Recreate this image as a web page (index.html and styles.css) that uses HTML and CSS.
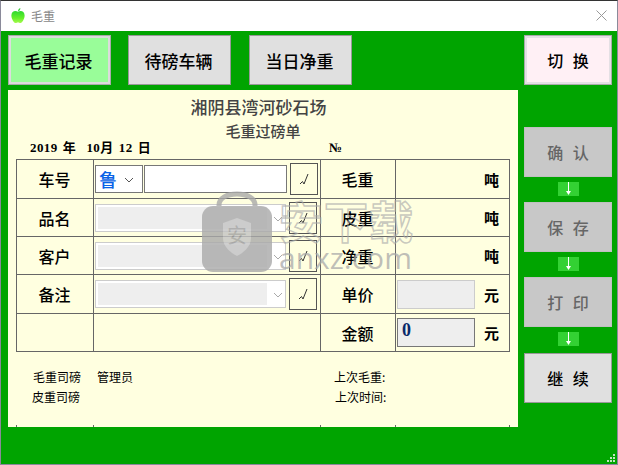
FILE: index.html
```html
<!DOCTYPE html>
<html lang="zh-CN">
<head>
    <meta charset="UTF-8">
    <title>毛重</title>
    <link rel="stylesheet" href="styles.css">
</head>
<body>
    <div class="window">
        <div class="titlebar">
            <svg class="app-icon" width="16" height="17" viewBox="0 0 16 18">
                <defs>
                    <linearGradient id="apple" x1="0" y1="0" x2="0" y2="1">
                        <stop offset="0" stop-color="#2fd82f"/>
                        <stop offset="0.6" stop-color="#66f02a"/>
                        <stop offset="1" stop-color="#a8fa50"/>
                    </linearGradient>
                </defs>
                <path d="M8 5C5 3.500 1 4.500 1 9c0 4 3 8 4.500 8 1 0 1.500-.5 2.500-.5s1.500.5 2.500.5C12 17 15 13 15 9c0-4.500-4-5.500-7-4z" fill="url(#apple)"/>
                <path d="M8 4.500C8 3 9 1.500 10.500 1 10.500 3 9.500 4.200 8 4.500z" fill="#33cc33"/>
            </svg>
            <span class="title-text">毛重</span>
            <svg class="close" width="11" height="11" viewBox="0 0 11 11">
                <path d="M.5.500l10 10M10.500.500l-10 10" stroke="#999" fill="none"/>
            </svg>
        </div>

        <div class="main">
            <div class="left">
                <div class="tabs">
                    <div class="btn tab tab-active">毛重记录</div>
                    <div class="btn tab">待磅车辆</div>
                    <div class="btn tab">当日净重</div>
                </div>

                <div class="paper">
                    <div class="company">湘阴县湾河砂石场</div>
                    <div class="doc-title">毛重过磅单</div>
                    <div class="date-row">
                        <span class="date">2019 年&nbsp; 10月 12 日</span>
                        <span class="doc-no">№</span>
                    </div>

                    <table class="form">
                        <colgroup>
                            <col class="col-label">
                            <col class="col-input">
                            <col class="col-label2">
                            <col class="col-value">
                        </colgroup>
                        <tr class="row-a">
                            <th>车号</th>
                            <td>
                                <div class="controls">
                                    <div class="select select-plate">
                                        <span class="plate">鲁</span>
                                        <svg class="chev" width="10" height="6" viewBox="0 0 10 6"><path d="M1 1l4 4 4-4" stroke="#555" fill="none"/></svg>
                                    </div>
                                    <div class="plate-input"></div>
                                    <div class="tick"><svg width="12" height="12" viewBox="0 0 12 12"><path d="M2 11l2.500-2.500 1.500 2.500 4-10" stroke="#333" fill="none"/></svg></div>
                                </div>
                            </td>
                            <th>毛重</th>
                            <td class="unit">吨</td>
                        </tr>
                        <tr class="row-b">
                            <th>品名</th>
                            <td>
                                <div class="controls">
                                    <div class="select select-off">
                                        <span class="fill"></span>
                                        <svg class="chev" width="10" height="6" viewBox="0 0 10 6"><path d="M1 1l4 4 4-4" stroke="#aaa" fill="none"/></svg>
                                    </div>
                                    <div class="tick"><svg width="12" height="12" viewBox="0 0 12 12"><path d="M2 11l2.500-2.500 1.500 2.500 4-10" stroke="#333" fill="none"/></svg></div>
                                </div>
                            </td>
                            <th>皮重</th>
                            <td class="unit">吨</td>
                        </tr>
                        <tr class="row-b">
                            <th>客户</th>
                            <td>
                                <div class="controls">
                                    <div class="select select-off">
                                        <span class="fill"></span>
                                        <svg class="chev" width="10" height="6" viewBox="0 0 10 6"><path d="M1 1l4 4 4-4" stroke="#aaa" fill="none"/></svg>
                                    </div>
                                    <div class="tick"><svg width="12" height="12" viewBox="0 0 12 12"><path d="M2 11l2.500-2.500 1.500 2.500 4-10" stroke="#333" fill="none"/></svg></div>
                                </div>
                            </td>
                            <th>净重</th>
                            <td class="unit">吨</td>
                        </tr>
                        <tr class="row-a">
                            <th>备注</th>
                            <td>
                                <div class="controls">
                                    <div class="select select-off">
                                        <span class="fill"></span>
                                        <svg class="chev" width="10" height="6" viewBox="0 0 10 6"><path d="M1 1l4 4 4-4" stroke="#aaa" fill="none"/></svg>
                                    </div>
                                    <div class="tick"><svg width="12" height="12" viewBox="0 0 12 12"><path d="M2 11l2.500-2.500 1.500 2.500 4-10" stroke="#333" fill="none"/></svg></div>
                                </div>
                            </td>
                            <th>单价</th>
                            <td>
                                <div class="value-cell">
                                    <div class="amount amount-off"></div>
                                    <span class="unit-text">元</span>
                                </div>
                            </td>
                        </tr>
                        <tr class="row-b">
                            <th></th>
                            <td></td>
                            <th>金额</th>
                            <td>
                                <div class="value-cell">
                                    <div class="amount">0</div>
                                    <span class="unit-text">元</span>
                                </div>
                            </td>
                        </tr>
                    </table>

                    <div class="notes">
                        <div class="notes-left">
                            <div class="note"><span class="note-key">毛重司磅</span><span>管理员</span></div>
                            <div class="note note-shift"><span class="note-key">皮重司磅</span></div>
                        </div>
                        <div class="notes-right">
                            <div class="note">上次毛重:</div>
                            <div class="note note-nudge">上次时间:</div>
                        </div>
                    </div>
                </div>
            </div>

            <div class="side">
                <div class="btn side-btn switch">切 换</div>
                <div class="btn side-btn off first-off">确 认</div>
                <div class="arrow"><svg width="7" height="14" viewBox="0 0 7 14"><path d="M3.500 0v10" stroke="#fff"/><path d="M1 9h5l-2.500 4z" fill="#fff"/></svg></div>
                <div class="btn side-btn off">保 存</div>
                <div class="arrow"><svg width="7" height="14" viewBox="0 0 7 14"><path d="M3.500 0v10" stroke="#fff"/><path d="M1 9h5l-2.500 4z" fill="#fff"/></svg></div>
                <div class="btn side-btn off">打 印</div>
                <div class="arrow"><svg width="7" height="14" viewBox="0 0 7 14"><path d="M3.500 0v10" stroke="#fff"/><path d="M1 9h5l-2.500 4z" fill="#fff"/></svg></div>
                <div class="btn side-btn next">继 续</div>
            </div>
        </div>

        <!-- watermark over the form -->
        <div class="watermark">
            <svg class="wm-lock" width="72" height="82" viewBox="0 0 72 82">
                <path d="M18 18V14C18 7 26 3 36 3s18 4 18 11v4" fill="none" stroke="#aaa" stroke-width="5"/>
                <rect x="1" y="15" width="70" height="66" rx="11" fill="#aaa"/>
                <path d="M22 32l14-5 14 5v15c0 9-8 15-14 18-6-3-14-9-14-18z" fill="#c4c4c4"/>
                <text x="36" y="52" text-anchor="middle" class="wm-lock-text">安</text>
            </svg>
            <div class="wm-text">
                <div class="wm-cn">安下载</div>
                <div class="wm-en">anxz.com</div>
            </div>
        </div>

        <svg class="grip" width="9" height="9" viewBox="0 0 9 9">
            <path d="M6 0h2v2H6zM3 3h2v2H3zM6 3h2v2H6zM0 6h2v2H0zM3 6h2v2H3zM6 6h2v2H6z" fill="#bfe6bf"/>
        </svg>
    </div>
</body>
</html>
```

FILE: styles.css
```css
* {
    margin: 0;
    padding: 0;
    box-sizing: border-box;
}

body {
    width: 618px;
    height: 465px;
    overflow: hidden;
    background: #333;
    font-family: "Noto Sans CJK SC", "Liberation Sans", sans-serif;
}

.window {
    position: relative;
    width: 618px;
    height: 465px;
    display: flex;
    flex-direction: column;
    background: #00a400;
    border-left: 1px solid #8a8a9a;
    border-right: 1px solid #8a8a9a;
    border-bottom: 1px solid #8a8a9a;
    border-top: 1px solid #333;
}

.titlebar {
    height: 30px;
    flex-shrink: 0;
    display: flex;
    align-items: center;
    background: #fff;
    padding: 0 10px 2px 9px;
}

.app-icon {
    margin-right: 5px;
}

.title-text {
    font-size: 12px;
    color: #888;
    flex: 1;
}

.main {
    flex: 1;
    display: flex;
    padding: 4px 5px 0 7px;
}

.left {
    width: 510px;
    margin-right: 6px;
}

.tabs {
    display: flex;
    gap: 17px;
    margin-bottom: 5px;
}

.btn {
    display: flex;
    align-items: center;
    justify-content: center;
    height: 50px;
    border: 1px solid #999;
    background: #e0e0e0;
    color: #000;
    font-weight: 500;
}

.tab {
    width: 103px;
    font-size: 17px;
    padding-right: 2px;
}

.tab:last-child {
    margin-left: 1px;
}

.tab-active {
    background: #99fd99;
    border-color: #aaa;
    box-shadow: inset 0 0 0 2px #dcdcdc;
}

.paper {
    position: relative;
    height: 337px;
    background: #ffffe0;
    padding: 7px 8px 0;
    color: #000;
}

/* short stubs of table lines left at the bottom edge */
.paper::after {
    content: "";
    position: absolute;
    left: 8px;
    right: 8px;
    bottom: 0;
    height: 2px;
    background:
        linear-gradient(#666, #666) 0 0 / 1px 2px no-repeat,
        linear-gradient(#666, #666) 77px 0 / 1px 2px no-repeat,
        linear-gradient(#666, #666) 304px 0 / 1px 2px no-repeat,
        linear-gradient(#666, #666) 379px 0 / 1px 2px no-repeat,
        linear-gradient(#666, #666) 493px 0 / 1px 2px no-repeat;
}

.company {
    text-align: center;
    font-size: 17px;
    font-weight: 500;
    line-height: 20px;
    color: #444;
    padding-right: 9px;
}

.doc-title {
    text-align: center;
    font-size: 15px;
    font-weight: 500;
    line-height: 20px;
    margin-top: 4px;
    color: #444;
}

.date-row {
    display: flex;
    height: 18px;
    align-items: flex-start;
    line-height: 14px;
    font-size: 13px;
    font-weight: 700;
    font-family: "Liberation Serif", "Noto Sans CJK SC", serif;
}

.date {
    margin-left: 14px;
    width: 299px;
    letter-spacing: 0.4px;
    word-spacing: 1.500px;
}

.doc-no {
    font-size: 13px;
}

.form {
    border-collapse: collapse;
    table-layout: fixed;
    width: 493px;
}

.col-label { width: 77px; }
.col-input { width: 227px; }
.col-label2 { width: 75px; }
.col-value { width: 114px; }

.form th,
.form td {
    border: 1px solid #666;
    padding: 0;
}

.form th {
    font-size: 16px;
    font-weight: 500;
    text-align: center;
    padding-right: 1px;
}

.row-a { height: 39px; }
.row-b { height: 38px; }

.unit {
    text-align: right;
    padding-right: 10px !important;
    font-size: 15px;
    font-weight: 700;
}

.controls {
    display: flex;
    align-items: center;
    padding-left: 1px;
    height: 100%;
}

.select {
    position: relative;
    height: 28px;
    display: flex;
    align-items: center;
    background: #fff;
}

.select-plate {
    width: 48px;
    border: 1px solid #777;
    padding-left: 3px;
}

.plate {
    font-size: 18px;
    line-height: 1;
    color: #0a62e6;
    font-weight: 500;
}

.select-plate .chev {
    position: absolute;
    right: 8px;
    top: 11px;
}

.select-off {
    width: 191px;
    border: 1px solid #ccc;
    padding: 2px;
}

.fill {
    display: block;
    width: 169px;
    height: 100%;
    background: #eee;
}

.select-off .chev {
    position: absolute;
    right: 2px;
    top: 11px;
}

.plate-input {
    width: 143px;
    height: 28px;
    margin-left: 1px;
    background: #fff;
    border: 1px solid #777;
}

.tick {
    width: 28px;
    height: 32px;
    margin-left: 3px;
    border: 1px solid #555;
    display: flex;
    align-items: center;
    justify-content: center;
}

.value-cell {
    display: flex;
    align-items: center;
    padding-left: 1px;
}

.amount {
    width: 78px;
    height: 29px;
    background: #eee;
    border: 1px solid #777;
    padding-left: 4px;
    font-family: "Liberation Serif", serif;
    font-size: 18px;
    line-height: 23px;
    font-weight: 700;
    color: #0a2a6a;
}

.amount-off {
    border-color: #ccc;
}

.unit-text {
    margin-left: 9px;
    font-size: 15px;
    font-weight: 700;
}

.notes {
    display: flex;
    padding-top: 15px;
    font-size: 12px;
    line-height: 20px;
    color: #000;
}

.notes-left {
    width: 318px;
    padding-left: 17px;
}

.note-key {
    display: inline-block;
    width: 64px;
}

.note-shift {
    margin-left: -1px;
}

.note-nudge {
    margin-left: 1px;
}

.side {
    width: 88px;
    display: flex;
    flex-direction: column;
    align-items: center;
}

.side-btn {
    width: 88px;
    font-size: 16px;
    word-spacing: 6px;
    white-space: pre;
}

.switch {
    background: #fff0f5;
    border-color: #aaa;
    box-shadow: inset 0 0 0 2px #e4e0e4;
    margin-bottom: 42px;
}

.off {
    background: #c8c8c8;
    border-color: #c0c0c0;
    color: #666;
}

.arrow {
    width: 21px;
    height: 14px;
    margin: 5px 0 6px;
    background: #33d133;
    display: flex;
    justify-content: center;
}

.next {
    margin-top: 1px;
}

.watermark {
    position: absolute;
    left: 200px;
    top: 190px;
    display: flex;
    pointer-events: none;
}

.wm-lock {
    opacity: 0.8;
}

.wm-lock-text {
    font-size: 20px;
    fill: #a0a0a0;
}

.wm-text {
    margin-left: 6px;
    margin-top: 4px;
    width: 140px;
}

.wm-cn {
    font-size: 44px;
    line-height: 50px;
    font-weight: 700;
    letter-spacing: 1px;
    color: transparent;
    -webkit-text-stroke: 1.500px rgba(170, 170, 170, 0.65);
}

.wm-en {
    font-family: "Open Sans", sans-serif;
    font-size: 30px;
    line-height: 26px;
    color: rgba(170, 170, 170, 0.75);
}

.grip {
    position: absolute;
    right: 1px;
    bottom: 1px;
}
```
